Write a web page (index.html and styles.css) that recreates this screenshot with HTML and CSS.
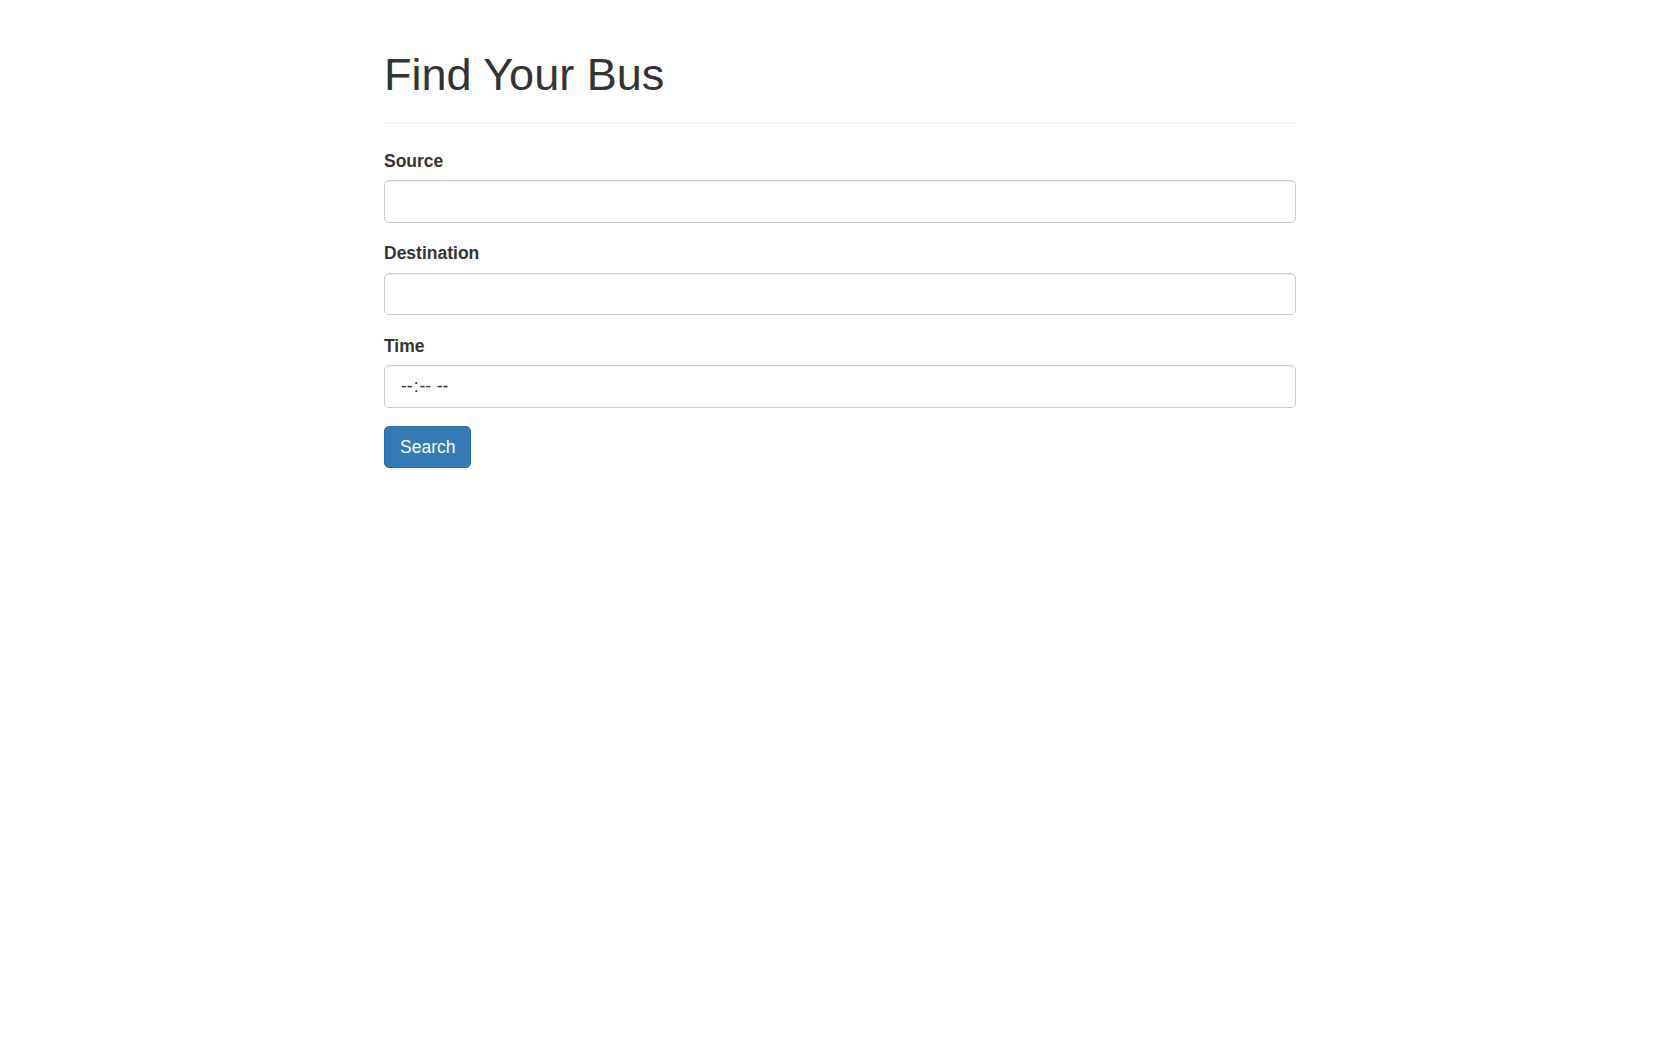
FILE: index.html
```html
<!DOCTYPE html>
<html lang="en">
<head>
<meta charset="utf-8">
<title>Find Your Bus</title>
<link rel="stylesheet" href="styles.css">
</head>
<body>
<div class="container">
  <div class="page-header">
    <h1>Find Your Bus</h1>
  </div>
  <form class="search-form">
    <div class="form-group">
      <label for="source">Source</label>
      <input type="text" id="source" class="form-control">
    </div>
    <div class="form-group">
      <label for="destination">Destination</label>
      <input type="text" id="destination" class="form-control">
    </div>
    <div class="form-group">
      <label for="time">Time</label>
      <input type="time" id="time" class="form-control">
    </div>
    <button type="button" class="btn btn-primary">Search</button>
  </form>
</div>
</body>
</html>
```
FILE: styles.css
```css
* {
  box-sizing: border-box;
}

html, body {
  margin: 0;
  padding: 0;
  background: #fff;
}

body {
  font-family: "Liberation Sans", Arial, Helvetica, sans-serif;
  font-size: 17.5px;
  line-height: 25px;
  color: #333;
}

.container {
  width: 912px;
  margin: 0 auto;
  padding-top: 49.5px;
}

.page-header {
  padding-bottom: 11.25px;
  margin-bottom: 25px;
  border-bottom: 1px solid #eee;
}

.page-header h1 {
  margin: 0 0 12.5px;
  font-size: 45px;
  line-height: 49.5px;
  font-weight: 500;
  color: #333;
}

.form-group {
  margin-bottom: 18.75px;
}

label {
  display: block;
  font-weight: bold;
  margin-bottom: 6.25px;
  font-size: 17.5px;
  line-height: 25px;
}

.form-control {
  display: block;
  width: 100%;
  height: 42.5px;
  padding: 7.5px 15px;
  font-family: inherit;
  font-size: 17.5px;
  line-height: 25px;
  color: #555;
  background: #fff;
  border: 1px solid #ccc;
  border-radius: 5px;
  box-shadow: inset 0 1px 1px rgba(0, 0, 0, 0.075);
  outline: none;
  margin: 0;
}

.form-control::-webkit-calendar-picker-indicator {
  display: none;
}

.form-control::-webkit-datetime-edit,
.form-control::-webkit-datetime-edit-hour-field,
.form-control::-webkit-datetime-edit-minute-field,
.form-control::-webkit-datetime-edit-ampm-field,
.form-control::-webkit-datetime-edit-text {
  color: #333;
}

.btn {
  display: inline-block;
  padding: 7.5px 15px;
  font-family: inherit;
  font-size: 17.5px;
  line-height: 25px;
  border: 1px solid transparent;
  border-radius: 5px;
  cursor: pointer;
  margin: 0;
}

.btn-primary {
  color: #fff;
  background-color: #337ab7;
  border-color: #2e6da4;
}
```
